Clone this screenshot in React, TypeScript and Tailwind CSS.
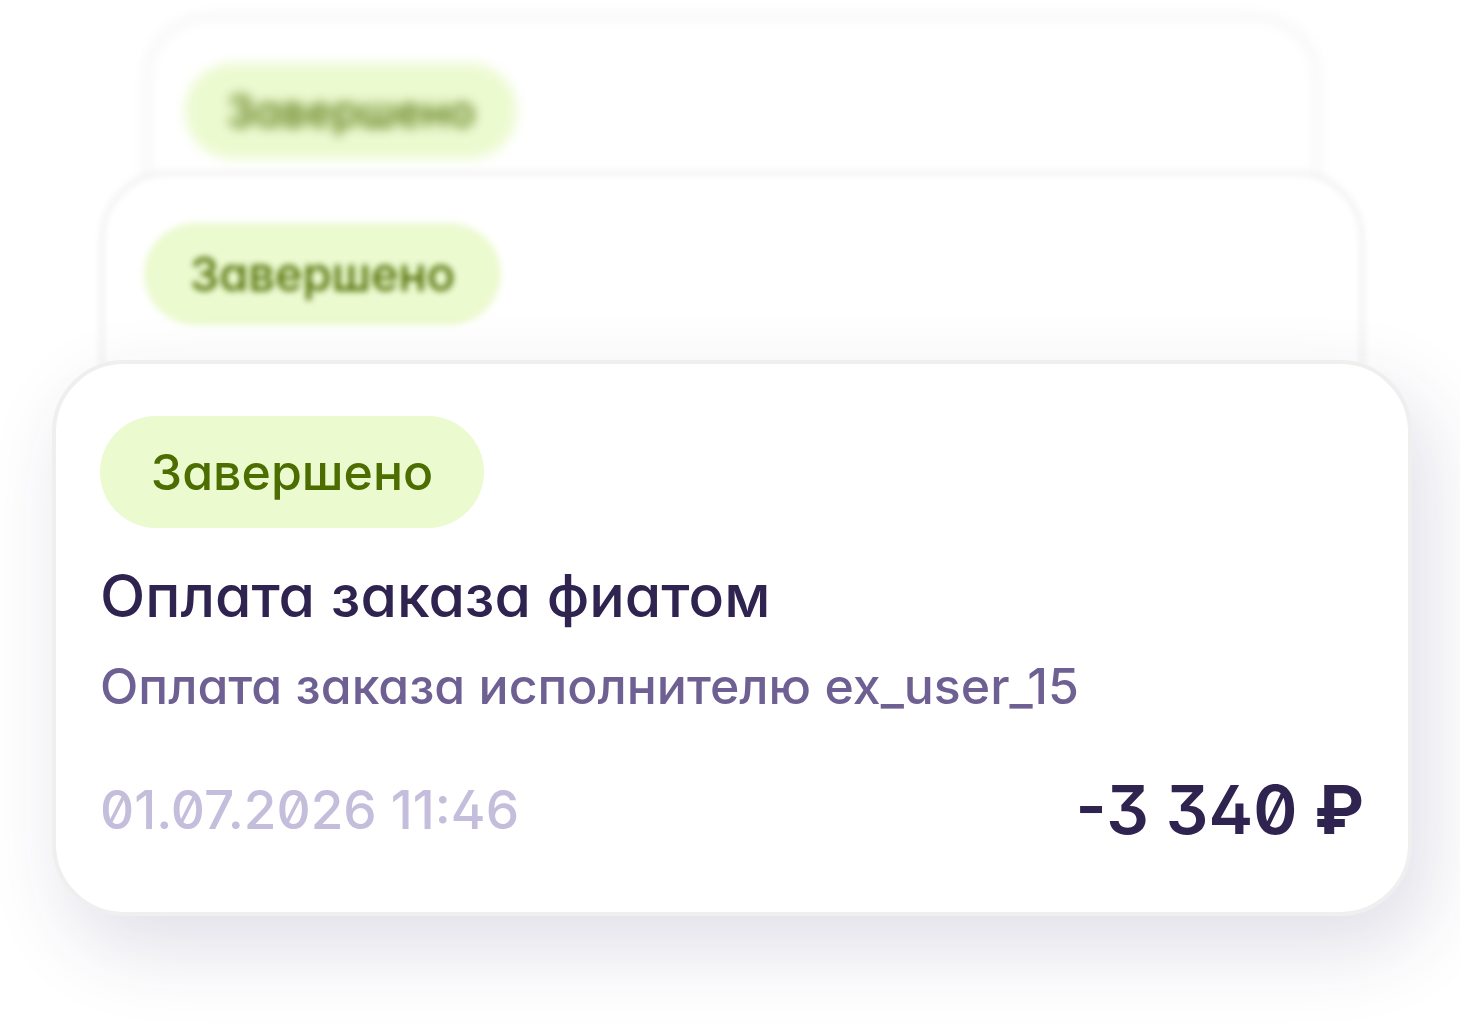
import clsx from 'clsx';

interface Payment {
  status: string;
  title: string;
  description: string;
  date: string;
  amount: string;
  currency: string;
}

const payment: Payment = {
  status: 'Завершено',
  title: 'Оплата заказа фиатом',
  description: 'Оплата заказа исполнителю ex_user_15',
  date: '01.07.2026 11:46',
  amount: '-3 340',
  currency: '₽',
};

const StatusBadge = ({ label, className }: { label: string; className: string }) => (
  <span
    className={clsx('inline-flex items-center justify-center bg-[#ecfad0] font-medium text-[#4c6d00]', className)}
  >
    {label}
  </span>
);

function PaymentCard({ payment }: { payment: Payment }) {
  return (
    <article className="relative -mt-40 rounded-[72px] border-4 border-[#efefef] bg-white px-11 pt-[52px] pb-[62px] shadow-[16px_32px_80px_rgba(48,37,100,0.15)]">
      <StatusBadge label={payment.status} className="h-28 min-w-96 rounded-full px-12 text-[50px]" />
      <h2 className="mt-8 text-[59px] leading-[72px] font-medium text-[#2f234f]">{payment.title}</h2>
      <p className="mt-6 text-[50px] leading-[60px] font-medium text-[#6f6093]">{payment.description}</p>
      <div className="mt-[54px] flex items-center justify-between">
        <time dateTime="2026-07-01T11:46" className="text-[53px] leading-[60px] font-medium text-[#c4bddb]">
          {payment.date}
        </time>
        <p className="text-[67px] leading-[80px] font-semibold text-[#2f234f]">
          {payment.amount} <span className="font-bold">{payment.currency}</span>
        </p>
      </div>
    </article>
  );
}

export default function App() {
  return (
    <main className="overflow-hidden bg-white pt-[15px] pr-12 pb-28 pl-[52px] font-[Inter,sans-serif] [font-feature-settings:'zero','cv02','cv09','cv11']">
      {/* older payments fade out behind the latest one */}
      <div className="mx-[93px] rounded-t-[64px] border-4 border-[#efefef] bg-white px-9 pt-11 pb-40 blur-[6px]">
        <StatusBadge label={payment.status} className="h-24 min-w-[332px] rounded-full px-10 text-[44px]" />
      </div>
      <div className="relative mx-12 -mt-38 rounded-t-[68px] border-4 border-[#efefef] bg-white px-10 pt-12 pb-[191px] blur-[3px]">
        <StatusBadge label={payment.status} className="h-[102px] min-w-[357px] rounded-full px-11 text-[47px]" />
      </div>
      <PaymentCard payment={payment} />
    </main>
  );
}
